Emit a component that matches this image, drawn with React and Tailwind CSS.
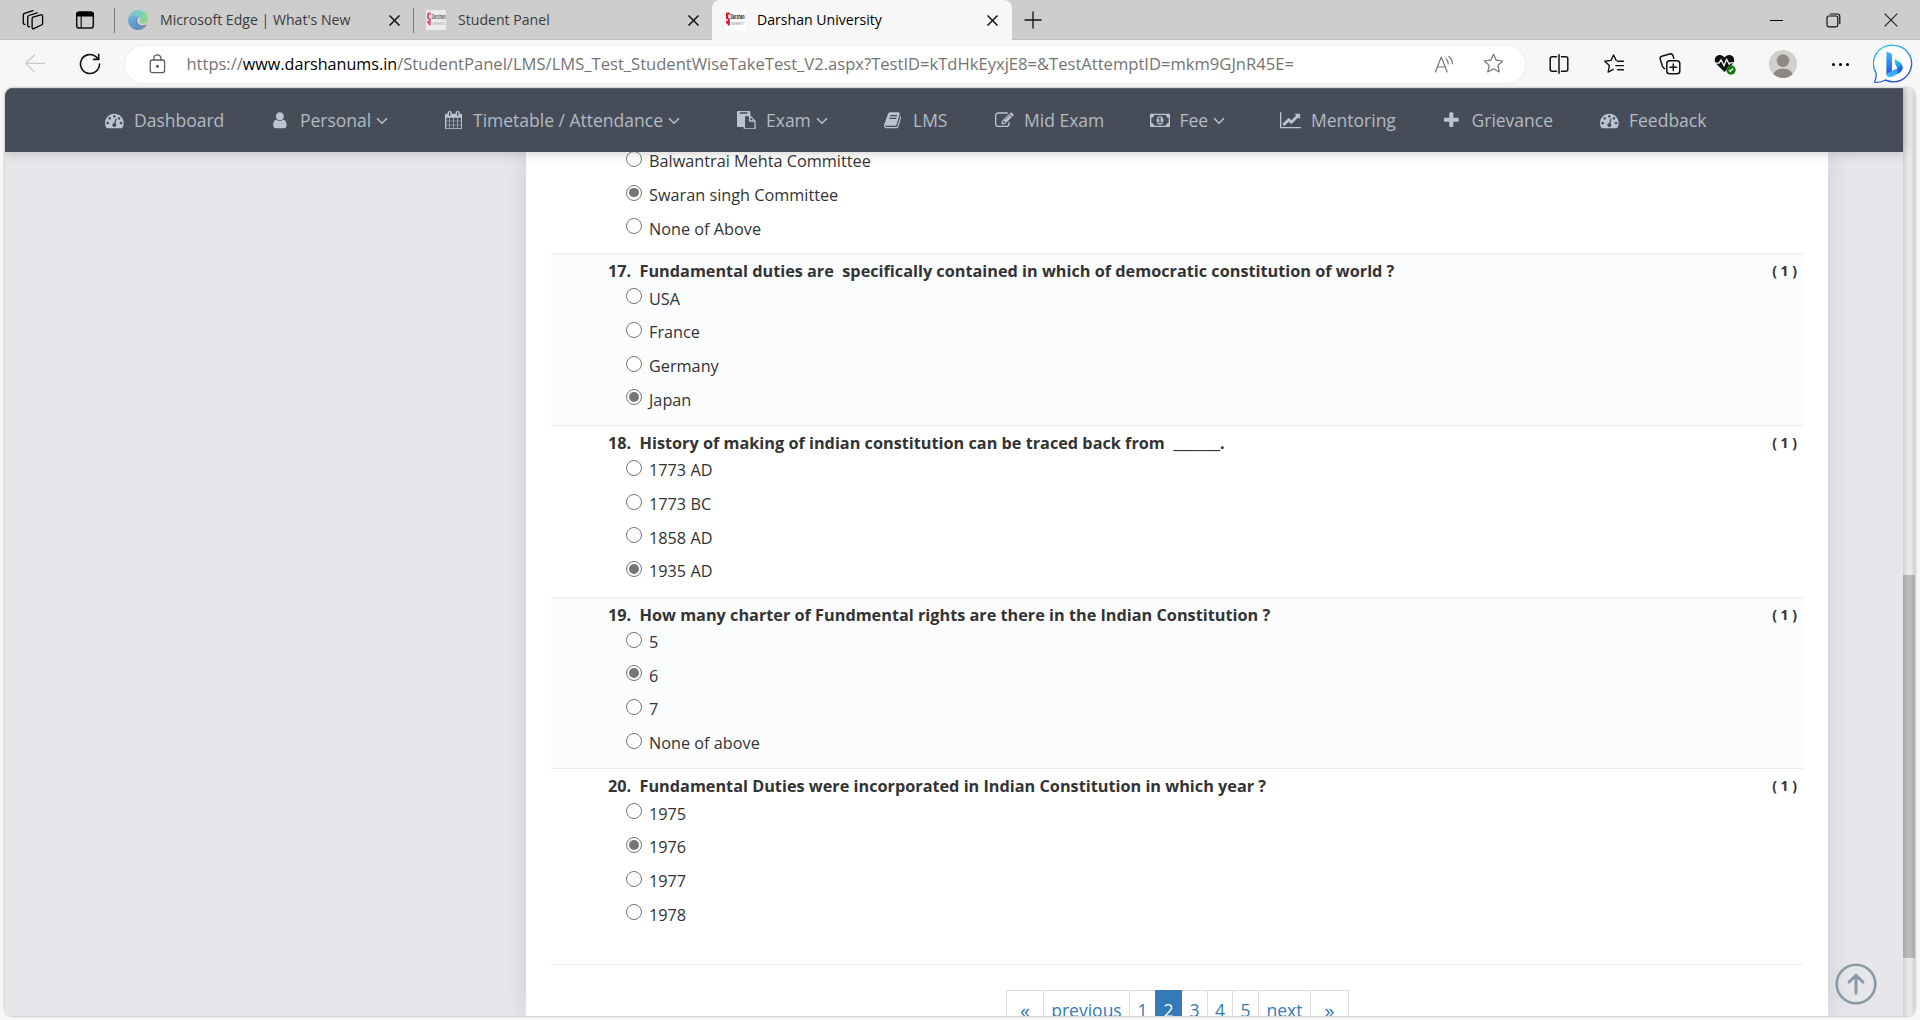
import React from 'react';

/* ---------- navigation icon shapes (1792-unit grid) ---------- */
const GAUGE = 'M384 1152q0-53-37.5-90.5t-90.5-37.5-90.5 37.5-37.5 90.5 37.5 90.5 90.5 37.5 90.5-37.5 37.5-90.5zm192-448q0-53-37.5-90.5t-90.5-37.5-90.5 37.5-37.5 90.5 37.5 90.5 90.5 37.5 90.5-37.5 37.5-90.5zm428 481l101-382q6-26-7.5-48.5t-38.5-29.5-48 6.5-30 39.5l-101 382q-60 5-107 43.5t-63 98.5q-20 77 20 146t117 89 146-20 89-117q16-60-6-117t-72-91zm660-33q0-53-37.5-90.5t-90.5-37.5-90.5 37.5-37.5 90.5 37.5 90.5 90.5 37.5 90.5-37.5 37.5-90.5zm-640-640q0-53-37.5-90.5t-90.5-37.5-90.5 37.5-37.5 90.5 37.5 90.5 90.5 37.5 90.5-37.5 37.5-90.5zm448 192q0-53-37.5-90.5t-90.5-37.5-90.5 37.5-37.5 90.5 37.5 90.5 90.5 37.5 90.5-37.5 37.5-90.5zm320 448q0 261-141 483-19 29-54 29h-1402q-35 0-54-29-141-221-141-483 0-182 71-348t191-286 286-191 348-71 348 71 286 191 191 286 71 348z';
const USER = 'M1536 1399q0 109-62.5 187t-150.5 78h-854q-88 0-150.5-78t-62.5-187q0-85 8.5-160.5t31.5-152 58.5-131 94-89 134.5-34.5q131 128 313 128t313-128q76 0 134.5 34.5t94 89 58.5 131 31.5 152 8.5 160.5zm-256-887q0 159-112.5 271.5t-271.5 112.5-271.5-112.5-112.5-271.5 112.5-271.5 271.5-112.5 271.5 112.5 112.5 271.5z';
const CALENDAR = 'M192 1664h288v-288h-288v288zm352 0h320v-288h-320v288zm-352-352h288v-320h-288v320zm352 0h320v-320h-320v320zm-352-384h288v-288h-288v288zm736 736h320v-288h-320v288zm-384-736h320v-288h-320v288zm768 736h288v-288h-288v288zm-384-352h320v-320h-320v320zm-352-864v-288q0-13-9.5-22.5t-22.5-9.5h-64q-13 0-22.5 9.5t-9.5 22.5v288q0 13 9.5 22.5t22.5 9.5h64q13 0 22.5-9.5t9.5-22.5zm736 864h288v-320h-288v320zm-384-384h320v-288h-320v288zm384 0h288v-288h-288v288zm32-480v-288q0-13-9.5-22.5t-22.5-9.5h-64q-13 0-22.5 9.5t-9.5 22.5v288q0 13 9.5 22.5t22.5 9.5h64q13 0 22.5-9.5t9.5-22.5zm384-64v1280q0 52-38 90t-90 38h-1408q-52 0-90-38t-38-90v-1280q0-52 38-90t90-38h128v-96q0-66 47-113t113-47h64q66 0 113 47t47 113v96h384v-96q0-66 47-113t113-47h64q66 0 113 47t47 113v96h128q52 0 90 38t38 90z';
const PASTE = 'M768 1664h896v-640h-416q-40 0-68-28t-28-68v-416h-384v1152zm256-1440v-64q0-13-9.5-22.5t-22.5-9.5h-704q-13 0-22.5 9.5t-9.5 22.5v64q0 13 9.5 22.5t22.5 9.5h704q13 0 22.5-9.5t9.5-22.5zm256 672h299l-299-299v299zm512 128v672q0 40-28 68t-68 28h-960q-40 0-68-28t-28-68v-160h-544q-40 0-68-28t-28-68v-1344q0-40 28-68t68-28h1088q40 0 68 28t28 68v328q21 13 36 28l408 408q28 28 48 76t20 88z';
const BOOK = 'M1703 478q40 57 18 129l-275 906q-19 64-76.5 107.5t-122.5 43.5h-923q-77 0-148.5-53.5t-99.5-131.5q-24-67-2-127 0-4 3-27t4-37q1-8-3-21.5t-3-19.5q2-11 8-21t16.5-23.5 16.5-23.5q23-38 45-91.5t30-91.5q3-10 .5-30t-.5-28q3-11 17-28t17-23q21-36 42-92t25-90q1-9-2.5-32t.5-28q4-13 22-30.5t22-22.5q19-26 42.5-84.5t27.5-96.5q1-8-3-25.5t-2-26.5q2-8 9-18t18-23 17-21q8-12 16.5-30.5t15-35 16-36 19.5-32 26.5-23.5 36-11.5 47.5 5.5l-1 3q38-9 51-9h761q74 0 114 56t18 130l-274 906q-36 119-71.5 153.5t-128.5 34.5h-869q-27 0-38 15-11 16-1 43 24 70 144 70h923q29 0 56-15.5t35-41.5l300-987q7-22 5-57 38 15 59 43zm-1064 2q-4 13 2 22.5t20 9.5h608q13 0 25.5-9.5t16.5-22.5l21-64q4-13-2-22.5t-20-9.5h-608q-13 0-25.5 9.5t-16.5 22.5zm-83 256q-4 13 2 22.5t20 9.5h608q13 0 25.5-9.5t16.5-22.5l21-64q4-13-2-22.5t-20-9.5h-608q-13 0-25.5 9.5t-16.5 22.5z';
const EDIT = 'M888 1184l116-116-152-152-116 116v56h96v96h56zm440-720q-16-16-33 1l-350 350q-17 17-1 33t33-1l350-350q17-17 1-33zm80 594v190q0 119-84.5 203.5t-203.5 84.5h-832q-119 0-203.5-84.5t-84.5-203.5v-832q0-119 84.5-203.5t203.5-84.5h832q63 0 117 25 15 7 18 23 3 17-9 29l-49 49q-14 14-32 8-23-6-45-6h-832q-66 0-113 47t-47 113v832q0 66 47 113t113 47h832q66 0 113-47t47-113v-126q0-13 9-22l64-64q15-15 35-7t20 29zm-96-738l288 288-672 672h-288v-288zm444 132l-92 92-288-288 92-92q28-28 68-28t68 28l152 152q28 28 28 68t-28 68z';
const MONEY = 'M768 1152h384v-96h-128v-448h-114l-148 137 77 80q42-37 55-57h2v288h-128v96zm512-256q0 70-21 142t-59.5 134-101.5 101-138 39-138-39-101.5-101-59.5-134-21-142 21-142 59.5-134 101.5-101 138-39 138 39 101.5 101 59.5 134 21 142zm512 256v-512q-106 0-181-75t-75-181h-1152q0 106-75 181t-181 75v512q106 0 181 75t75 181h1152q0-106 75-181t181-75zm128-832v1152q0 26-19 45t-45 19h-1792q-26 0-45-19t-19-45v-1152q0-26 19-45t45-19h1792q26 0 45 19t19 45z';
const CHART = 'M2048 1536v128h-2048v-1536h128v1408h1920zm-128-1248v435q0 21-19.5 29.5t-35.5-7.5l-121-121-633 633q-10 10-23 10t-23-10l-233-233-416 416-192-192 585-585q10-10 23-10t23 10l233 233 464-464-121-121q-16-16-7.5-35.5t29.5-19.5h435q14 0 23 9t9 23z';
const PLUS = 'M1600 736v192q0 40-28 68t-68 28h-416v416q0 40-28 68t-68 28h-192q-40 0-68-28t-28-68v-416h-416q-40 0-68-28t-28-68v-192q0-40 28-68t68-28h416v-416q0-40 28-68t68-28h192q40 0 68 28t28 68v416h416q40 0 68 28t28 68z';

const NAV = [
  { label: 'Dashboard', d: GAUGE, cell: 'w-[168px]', icon: 'w-[29px]' },
  { label: 'Personal', d: USER, cell: 'w-[172px]', icon: 'w-[27px]', vb: '256 0 1280 1792', w: 'w-[13.7px]', menu: true },
  { label: 'Timetable / Attendance', d: CALENDAR, cell: 'w-[292px]', icon: 'w-[28px]', vb: '64 0 1664 1792', w: 'w-[17.4px]', menu: true },
  { label: 'Exam', d: PASTE, cell: 'w-[147px]', icon: 'w-[29px]', menu: true },
  { label: 'LMS', d: BOOK, cell: 'w-[111px]', icon: 'w-[29px]', vb: '64 0 1664 1792', w: 'w-[17.4px]' },
  { label: 'Mid Exam', d: EDIT, cell: 'w-[155px]', icon: 'w-[29px]' },
  { label: 'Fee', d: MONEY, cell: 'w-[130px]', icon: 'w-[29.5px]', vb: '0 0 1920 1792', w: 'w-[20px]', menu: true },
  { label: 'Mentoring', d: CHART, cell: 'w-[164px]', icon: 'w-[31px]', vb: '0 0 2048 1792', w: 'w-[21.4px]' },
  { label: 'Grievance', d: PLUS, cell: 'w-[156px]', icon: 'w-[27.5px]', vb: '192 0 1408 1792', w: 'w-[14.7px]' },
  { label: 'Feedback', d: GAUGE, cell: 'w-[120px]', icon: 'w-[29px]' },
];

const QUESTIONS = [
  { no: '17.', text: 'Fundamental duties are\u00a0 specifically contained in which of democratic constitution of world ?', options: ['USA', 'France', 'Germany', 'Japan'], picked: 3, shade: true },
  { no: '18.', text: 'History of making of indian constitution can be traced back from\u00a0 _______.', options: ['1773 AD', '1773 BC', '1858 AD', '1935 AD'], picked: 3 },
  { no: '19.', text: 'How many charter of Fundmental rights are there in the Indian Constitution ?', options: ['5', '6', '7', 'None of above'], picked: 1, shade: true },
  { no: '20.', text: 'Fundamental Duties were incorporated in Indian Constitution in which year ?', options: ['1975', '1976', '1977', '1978'], picked: 1 },
];

const PAGES = [
  ['«', 'w-[37px]'],
  ['previous', 'w-[86px]'],
  ['1', 'w-[26px]'],
  ['2', 'w-[27px]'],
  ['3', 'w-[25px]'],
  ['4', 'w-[25px]'],
  ['5', 'w-[26px]'],
  ['next', 'w-[52px]'],
  ['»', 'w-[39px]'],
];

function Line({ children, className, box = '0 0 20 20', sw = 1.3 }) {
  return (
    <svg viewBox={box} className={className} fill="none" stroke="currentColor" strokeWidth={sw} strokeLinecap="round" strokeLinejoin="round">
      {children}
    </svg>
  );
}

function TabClose({ className }) {
  return (
    <svg viewBox="0 0 11 11" className={'h-[11px] w-[11px] shrink-0 ' + className} stroke="#111" strokeWidth="1.5">
      <path d="M.5.5l10 10M10.5.5l-10 10" />
    </svg>
  );
}

function DarshanLogo({ className }) {
  return (
    <svg viewBox="0 0 20 20" className={'h-5 w-5 shrink-0 ' + className}>
      <rect width="20" height="20" fill="#fff" />
      <path d="M1.6 2.6H4.8V4.8H3.2V8.2H4.8V15.4H3.4L1 12.6V11H2.6V9.6L1 8.4V3.4Z" fill="#dd1338" />
      <text x="5.6" y="8.8" fontSize="6.8" fontWeight="700" fontFamily="Liberation Sans, sans-serif" textLength="14" lengthAdjust="spacingAndGlyphs" fill="#111">Darshan</text>
      <text x="5.8" y="14.6" fontSize="4" fontFamily="Liberation Sans, sans-serif" textLength="13.6" lengthAdjust="spacingAndGlyphs" fill="#777">UNIVERSITY</text>
    </svg>
  );
}

function EdgeLogo() {
  return (
    <svg viewBox="0 0 20 20" className="ml-[13px] h-5 w-5 shrink-0 opacity-60">
      <defs>
        <linearGradient id="eg" x1="0" y1="0" x2="1" y2=".4">
          <stop offset="0" stopColor="#35b8f0" />
          <stop offset=".6" stopColor="#3fd0b6" />
          <stop offset="1" stopColor="#6be05c" />
        </linearGradient>
        <linearGradient id="eb" x1="0" y1="0" x2="0" y2="1">
          <stop offset="0" stopColor="#2fa6e6" />
          <stop offset="1" stopColor="#0f5fb8" />
        </linearGradient>
      </defs>
      <path d="M.1 9.2C.8 3.8 5 0 10.200 0 16 0 20 4 20 8.400c0 3.100-2.400 5-5.200 5-2 0-3.100-.6-3.100-1.300 0-.6.9-1 .9-2.400C12.600 7.300 10.300 5.300 7 5.300 3.600 5.300 1 7 .1 9.200Z" fill="url(#eg)" />
      <path d="M.1 9.200C1 7 3.600 5.300 7 5.300c2.400 0 4 .9 4.900 2.200C9.400 6.900 7.200 8.700 7.200 11.600c0 3.400 3 5.700 6.300 5.700 1.900 0 3.400-.5 4.700-1.500C16.500 18.400 13.500 20 10 20 4.300 20-.4 15.200.1 9.200Z" fill="url(#eb)" />
      <path d="M7.200 11.600c0-2.300 1.400-4 3.200-4.200-1 .8-1.500 1.900-1.500 3.100 0 3 2.700 5 5.700 5 1.400 0 2.600-.3 3.700-.8l.2.700c-1.300 1.300-3 1.900-5 1.900-3.300 0-6.300-2.300-6.300-5.700Z" fill="#1c4fa0" />
    </svg>
  );
}

function BingLogo() {
  return (
    <svg viewBox="0 0 40 42" className="h-[42px] w-10">
      <defs>
        <linearGradient id="ring" x1=".2" y1="0" x2=".6" y2="1">
          <stop offset="0" stopColor="#2cc3ee" />
          <stop offset=".5" stopColor="#2a86e6" />
          <stop offset="1" stopColor="#2247d8" />
        </linearGradient>
        <linearGradient id="stem" x1="0" y1="0" x2="0" y2="1">
          <stop offset="0" stopColor="#45b4fa" />
          <stop offset=".6" stopColor="#2f7df0" />
          <stop offset="1" stopColor="#1f4fdc" />
        </linearGradient>
        <linearGradient id="bowl" x1=".3" y1="0" x2=".4" y2="1">
          <stop offset="0" stopColor="#2fdfdc" />
          <stop offset=".5" stopColor="#2a8dec" />
          <stop offset="1" stopColor="#4cc0ff" />
        </linearGradient>
      </defs>
      <path d="M20.500 2.400a18.200 18.200 0 1 1-8 34.600c-3 1.900-6.500 2.600-10.400 2.300-.5 0-.7-.5-.4-.9 1.400-2 1.600-5 1.300-8.500A18.200 18.200 0 0 1 20.500 2.400Z" fill="#fff" stroke="url(#ring)" strokeWidth="1.400" />
      <path d="M13.400 9.200Q13.400 8.400 14.200 8.800L17.800 10.200Q19 10.800 19 12V28L13.400 32Z" fill="url(#stem)" />
      <path d="M21.400 16.700Q21.400 15.900 22.200 16.300L27 19Q29.800 20.800 29.800 24.200Q29.800 27.800 27 29.600L20 33.400Q13.400 35.800 13.400 30.400L24.600 25.200 22.800 22.600Z" fill="url(#bowl)" />
      <path d="M24.600 25.200L28 22.800Q29.800 24 29.800 25Q29.400 28 27 29.600L24.400 31Z" fill="#2457dc" opacity=".75" />
    </svg>
  );
}

function TabStrip() {
  return (
    <div className="flex h-10 items-center bg-[#cdcdcd] shadow-[inset_0_-1px_0_#bdbdbd]">
      <Line className="ml-[21.500px] h-[22px] w-[22px] shrink-0" box="0 0 22 22" sw={1.3}>
        <path d="M10.800 8.200l8.200-2.400q1.600-.4 1.600 1.200v7.400q0 1.200-1.200 1.600l-7.600 3.600q-1.700.6-1.700-1.200V9.800q0-1.200.7-1.600Z" />
        <path d="M7.600 17.600q-1.900.5-1.900-1.400V8.200q0-1.300 1.200-1.700l8.300-2.600" />
        <path d="M3 15.400q-1.700.1-1.700-1.700V6q0-1.300 1.200-1.700L11 1.600" />
      </Line>
      <svg viewBox="0 0 20 20" className="ml-[31.500px] h-5 w-5 shrink-0">
        <rect x="1.700" y="2.200" width="16.600" height="15.800" rx="2.600" fill="none" stroke="#111" strokeWidth="1.500" />
        <path d="M1 6.600V4.600Q1 1.400 4.200 1.400H15.800Q19 1.400 19 4.600V6.600Z" />
        <path d="M6.200 6V18" stroke="#111" strokeWidth="1.200" />
      </svg>
      <div className="ml-[19px] h-[25px] w-px shrink-0 bg-[#777]" />
      <div className="flex w-[298px] shrink-0 items-center">
        <EdgeLogo />
        <span className="ml-[12px] w-[222px] text-[14.1px] leading-5 whitespace-pre text-[#3b3b3b]">Microsoft Edge | What's New</span>
        <TabClose className="ml-[7px]" />
      </div>
      <div className="h-[25px] w-px shrink-0 bg-[#777]" />
      <div className="flex w-[298px] shrink-0 items-center">
        <DarshanLogo className="ml-[12px] opacity-60" />
        <span className="ml-3 w-[222px] text-[14.1px] leading-5 text-[#3b3b3b]">Student Panel</span>
        <TabClose className="ml-[7.500px]" />
      </div>
      <div className="flex h-10 w-[300px] shrink-0 items-center rounded-t-lg bg-[#f7f7f7]">
        <DarshanLogo className="ml-[13px]" />
        <span className="ml-3 w-[222px] text-[14.1px] leading-5 text-black">Darshan University</span>
        <TabClose className="ml-[7.500px]" />
      </div>
      <svg viewBox="0 0 18 18" className="mb-px ml-[12px] h-[18px] w-[18px] shrink-0" stroke="#111" strokeWidth="1.300">
        <path d="M9 .5v17M.5 9h17" />
      </svg>
      <div className="ml-auto flex items-center pr-[22px]">
        <div className="h-px w-[13px] bg-black" />
        <svg viewBox="0 0 15 15" className="ml-[43px] h-[15px] w-[15px]" fill="none" stroke="#111" strokeWidth="1.200">
          <rect x="1" y="3" width="10.800" height="10.800" rx="1.800" />
          <path d="M3.800 1H11.200Q13.800 1 13.800 3.600V11" />
        </svg>
        <svg viewBox="0 0 14 14" className="ml-[43px] h-[14px] w-[14px]" stroke="#222" strokeWidth="1.200">
          <path d="M.7.7l12.600 12.600M13.300.7L.7 13.300" />
        </svg>
      </div>
    </div>
  );
}

function Toolbar() {
  return (
    <div className="flex h-12 items-center bg-[#f7f7f7]">
      <Line className="ml-[25px] h-5 w-5 shrink-0 text-[#c9c9c9]" sw={1.3}>
        <path d="M19.400 9.300H.8M9.300 1L.8 9.300l8.500 8.300" />
      </Line>
      <Line className="ml-[34px] h-[22px] w-[22px] shrink-0 text-[#111]" box="0 0 22 22" sw={1.600}>
        <path d="M20.500 11A9.500 9.500 0 1 1 16.500 3.300L19.700 6M19.700 1.200V6.400H14.600" strokeLinejoin="miter" />
      </Line>
      <div className="ml-6 flex h-[37px] w-[1400px] shrink-0 items-center rounded-full bg-white text-[#747474] shadow-[0_0_3px_rgba(0,0,0,0.08)]">
        <Line className="mb-px ml-[24px] h-5 w-[17px] shrink-0 text-[#5d5d5d]" box="0 0 17 20" sw={1.300}>
          <rect x="1.200" y="6" width="14.400" height="12.600" rx="2" />
          <path d="M4.900 6V4.300a3.500 3.500 0 0 1 7 0V6" />
          <circle cx="8.400" cy="12.300" r=".9" fill="currentColor" />
        </Line>
        <span className="ml-[20.500px] w-[1246.500px] shrink-0 whitespace-nowrap leading-6">
          <span className="text-[16.5px]">https://</span>
          <span className="text-[16.15px] text-black">www.darshanums.in</span>
          <span className="text-[16.58px]">/StudentPanel/LMS/LMS_Test_StudentWiseTakeTest_V2.aspx?TestID=kTdHkEyxjE8=&amp;TestAttemptID=mkm9GJnR45E=</span>
        </span>
        <Line className="mb-px ml-px h-5 w-5 shrink-0" sw={1.200}>
          <path d="M1.400 18L7.300 3l5.900 15M3.400 13h7.800M12 4.600q2.400 2.300 2.200 5.400M14.800 2.300q3.600 3.300 3.600 7.400" />
        </Line>
        <Line className="mb-px ml-[29px] h-[21px] w-[21px] shrink-0" box="0 0 21 21" sw={1.200}>
          <path d="M10.500 1.200l2.700 6 6.500.8-4.800 4.400 1.300 6.500-5.700-3.200-5.700 3.200 1.300-6.500L1.300 8l6.500-.8Z" />
        </Line>
      </div>
      <div className="ml-[6px] flex shrink-0 items-center text-[#111]">
        <div className="flex w-[55.5px] justify-center">
          <Line className="h-5 w-5" sw={1.500}>
            <path d="M7.500 2.700H3.200Q1.200 2.700 1.200 4.700V15.300Q1.200 17.300 3.200 17.300H7.500M12.500 2.700H16.800Q18.800 2.700 18.800 4.700V15.300Q18.800 17.300 16.800 17.300H12.500M10 .8V19.200" />
          </Line>
        </div>
        <div className="flex w-[55.5px] justify-center">
          <Line className="h-5 w-5" sw={1.400}>
            <path d="M12.200 6.400L9.600 1 7 6.400l-6.200.9 4.500 4.300-1.100 6.500 5-2.700M13.600 7.300h5.800M11.800 11.600h7.600M13.600 15.800h5.800" />
          </Line>
        </div>
        <div className="flex w-[55.5px] justify-center">
          <Line className="h-[22px] w-[22px]" box="0 0 22 22" sw={1.500}>
            <rect x="7.800" y="7.800" width="13" height="13" rx="2.800" />
            <path d="M14.300 11v6.600M11 14.300h6.600M5.600 15.600Q4 14.700 3.400 13.100L1.200 6.300Q.6 4 2.800 3.200L10.600 1Q13 .4 14 2.600L14.800 5.200" />
          </Line>
        </div>
        <div className="flex w-[55.5px] justify-center">
          <svg viewBox="0 0 22 22" className="h-[22px] w-[22px]">
            <path d="M10.500 19L2.200 10.800C-.8 7.500 1.200 2 5.800 2c2 0 3.600 1 4.700 2.600C11.600 3 13.200 2 15.200 2c4.600 0 6.600 5.500 3.600 8.800Z" fill="#111" />
            <path d="M0 10.200H5l2-3.400 3 5.800 2.600-6.400 2.600 5 1-1.400H21" fill="none" stroke="#f7f7f7" strokeWidth="1.300" />
            <circle cx="17" cy="17" r="4.700" fill="#107c10" />
            <path d="M14.900 17.200l1.400 1.300 2.800-3" fill="none" stroke="#fff" strokeWidth="1.100" />
          </svg>
        </div>
        <div className="ml-px flex w-[57.5px] justify-center">
          <svg viewBox="0 0 28 28" className="h-7 w-7">
            <clipPath id="av"><circle cx="14" cy="14" r="14" /></clipPath>
            <g clipPath="url(#av)">
              <rect width="28" height="28" fill="#d3d0cc" />
              <circle cx="14" cy="10.600" r="6.300" fill="#8c8885" />
              <ellipse cx="14" cy="26" rx="10" ry="7.600" fill="#8c8885" />
            </g>
          </svg>
        </div>
        <div className="flex w-[57px] justify-center gap-[4px]">
          <i className="size-[3px] rounded-full bg-black" />
          <i className="size-[3px] rounded-full bg-black" />
          <i className="size-[3px] rounded-full bg-black" />
        </div>
        <div className="flex w-[49px] justify-center">
          <BingLogo />
        </div>
      </div>
    </div>
  );
}

function SiteNav() {
  return (
    <nav className="relative z-10 flex h-16 items-center border-t border-[#5d636d] bg-[#464d58] pl-[100px] text-[17.5px] text-[#b4bac5] shadow-[0_1px_10px_rgba(50,50,50,0.25)]">
      {NAV.map((n) => (
        <a key={n.label} className={'flex shrink-0 items-center whitespace-nowrap ' + n.cell}>
          <span className={'shrink-0 ' + n.icon}>
            <svg viewBox={n.vb || '0 0 1792 1792'} className={'mb-px h-[18.7px] ' + (n.w || 'w-[18.7px]')} fill="#bcc2cf">
              <path d={n.d} />
            </svg>
          </span>
          <span>{n.label}</span>
          {n.menu && (
            <svg viewBox="0 0 12 8" className="mt-px ml-[5px] h-2 w-3" fill="none" stroke="#b9bfca" strokeWidth="1.600">
              <path d="M1 1.200l5 5 5-5" />
            </svg>
          )}
        </a>
      ))}
    </nav>
  );
}

function Option({ label, checked }) {
  return (
    <div className="flex h-[33.7px] items-center">
      <span className="mb-[5.500px] ml-[75px] flex size-[16px] shrink-0 items-center justify-center rounded-full border-[1.250px] border-[#767676] bg-white">
        {checked && <span className="size-[9.500px] rounded-full bg-[#767676]" />}
      </span>
      <span className="ml-[7px]">{label}</span>
    </div>
  );
}

function Question({ q }) {
  return (
    <div className={'h-[171.7px] border-t border-[#e7ecf1] pt-[7.2px] ' + (q.shade ? 'bg-[#fbfcfe]' : 'bg-white')}>
      <div className="mb-[.7px] flex h-5 font-bold leading-5 whitespace-pre">
        <span className="ml-[57px] w-[31.500px]">{q.no}</span>
        <span>{q.text}</span>
        <span className="mr-[6px] ml-auto text-[14px]">( 1 )</span>
      </div>
      {q.options.map((o, i) => (
        <Option key={o} label={o} checked={i === q.picked} />
      ))}
    </div>
  );
}

export default function App() {
  return (
    <div className="flex h-[1020px] w-[1920px] flex-col overflow-hidden bg-[#f7f7f7] font-['Open_Sans',sans-serif]">
      <TabStrip />
      <Toolbar />
      <div className="mr-[5px] ml-[5px] flex h-[928px] overflow-hidden rounded-lg shadow-[0_0_3px_rgba(0,0,0,0.35)]">
        <div className="relative w-[1898px] bg-[#e7e6eb]">
          <SiteNav />
          <main className="ml-[521px] h-[864px] w-[1302px] overflow-hidden bg-white px-[25px] text-[16.25px] text-[#333] shadow-[0_0_22px_rgba(110,105,150,0.22)]">
            <div className="-mt-[7.2px] h-[108.4px]">
              <Option label="Balwantrai Mehta Committee" />
              <Option label="Swaran singh Committee" checked />
              <Option label="None of Above" />
            </div>
            {QUESTIONS.map((q) => (
              <Question key={q.no} q={q} />
            ))}
            <div className="mt-6 h-px bg-[#eee]" />
            <div className="mt-[25px] flex justify-center pl-px text-[17.5px] leading-[25px] text-[#337ab7]">
              {PAGES.map(([t, w], i) => (
                <span
                  key={t}
                  className={
                    'h-[42px] shrink-0 border-t pt-[7.5px] text-center ' + w +
                    (t === '2' ? ' border-[#337ab7] bg-[#337ab7] text-white' : ' border-[#ddd]' + (t === '3' ? '' : ' border-l')) +
                    (i === PAGES.length - 1 ? ' border-r' : '') +
                    (i === 0 || i === PAGES.length - 1 ? ' text-[20px]' : '')
                  }
                >
                  {t}
                </span>
              ))}
            </div>
          </main>
          <svg viewBox="0 0 42 42" className="absolute right-[26.500px] bottom-[11.500px] h-[42px] w-[42px]" fill="none" stroke="#8b98a6" strokeWidth="2.600" strokeLinecap="round">
            <circle cx="21" cy="21" r="19.300" />
            <path d="M21 30V12.500M14 19l7-6.700 7 6.700" strokeWidth="3" />
          </svg>
        </div>
        <div className="w-3 bg-[linear-gradient(90deg,#d2d2d2,#e9e9e9_45%,#e9e9e9_65%,#d0d0d0)]">
          <div className="mt-[487px] h-[383px] bg-[linear-gradient(90deg,#a9a9a9,#bababa_45%,#bababa_65%,#a8a8a8)]" />
        </div>
      </div>
    </div>
  );
}
